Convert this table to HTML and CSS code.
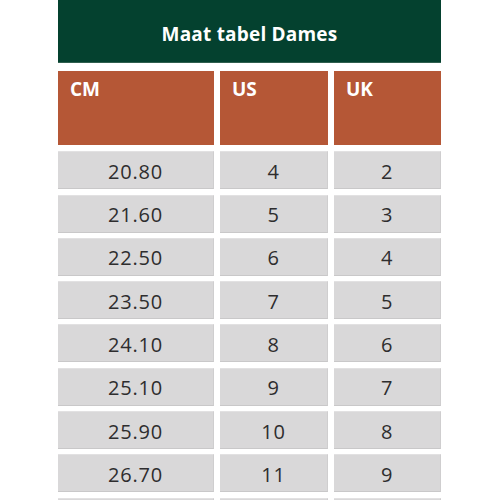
FILE: index.html
```html
<!DOCTYPE html>
<html>
<head>
<meta charset="utf-8">
<link rel="stylesheet" href="styles.css">
</head>
<body>
<div class="chart">
  <div class="title">Maat tabel Dames</div>
  <div class="grid">
    <div class="head">CM</div><div class="head">US</div><div class="head">UK</div>
    <div class="cell">20.80</div><div class="cell">4</div><div class="cell">2</div>
    <div class="cell">21.60</div><div class="cell">5</div><div class="cell">3</div>
    <div class="cell">22.50</div><div class="cell">6</div><div class="cell">4</div>
    <div class="cell">23.50</div><div class="cell">7</div><div class="cell">5</div>
    <div class="cell">24.10</div><div class="cell">8</div><div class="cell">6</div>
    <div class="cell">25.10</div><div class="cell">9</div><div class="cell">7</div>
    <div class="cell">25.90</div><div class="cell">10</div><div class="cell">8</div>
    <div class="cell">26.70</div><div class="cell">11</div><div class="cell">9</div>
    <div class="cell"></div><div class="cell"></div><div class="cell"></div>
  </div>
</div>
</body>
</html>
```
FILE: styles.css
```css
html, body {
  margin: 0;
  padding: 0;
  background: #ffffff;
  overflow: hidden;
}
.chart {
  width: 383px;
  margin-left: 58px;
  font-family: "Open Sans", "Liberation Sans", sans-serif;
}
.title {
  height: 63px;
  background: #04412f;
  border-bottom: 1px solid #2f5f4f;
  color: #ffffff;
  font-weight: 700;
  font-size: 19px;
  letter-spacing: 0.2px;
  display: flex;
  align-items: center;
  justify-content: center;
  padding-top: 6px;
  box-sizing: border-box;
}
.grid {
  margin-top: 8px;
  display: grid;
  grid-template-columns: 156px 108px 107px;
  column-gap: 6px;
  grid-auto-rows: 38px;
  grid-template-rows: 75px;
  row-gap: 5.3px;
}
.head {
  background: #b55736;
  color: #ffffff;
  font-weight: 700;
  font-size: 19px;
  padding: 5px 0 0 12px;
  box-sizing: border-box;
  margin-bottom: 1px;
}
.cell {
  background: #d9d8d9;
  border-top: 1px solid #e2e1e2;
  border-bottom: 1px solid #c9c8c9;
  border-right: 1px solid #cfcecf;
  box-sizing: border-box;
  color: #2e2d2e;
  font-size: 20px;
  letter-spacing: 0.8px;
  display: flex;
  align-items: center;
  justify-content: center;
  padding-top: 2px;
}
```
